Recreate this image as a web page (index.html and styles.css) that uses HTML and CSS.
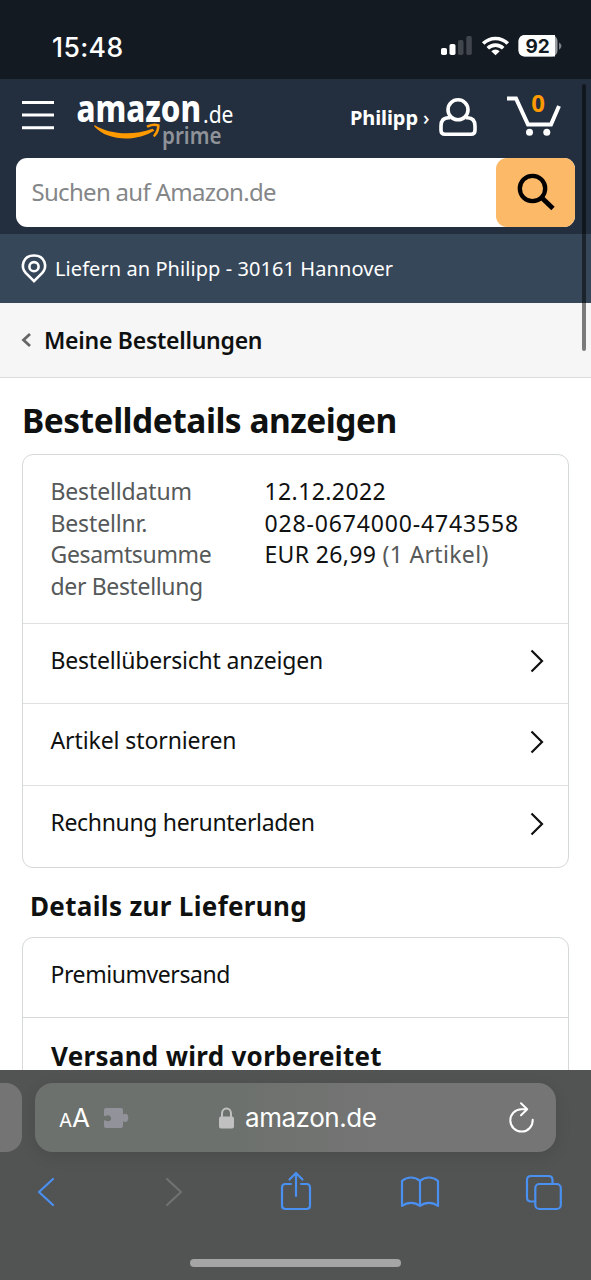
FILE: index.html
```
<!DOCTYPE html>
<html lang="de">
<head>
<meta charset="utf-8">
<title>Bestelldetails</title>
<link rel="stylesheet" href="styles.css">
</head>
<body>
<div class="phone">
  <div class="status">
    <span class="clock">15:48</span>
    <svg class="status-icons" width="124" height="26" viewBox="0 0 124 26">
      <g fill="#fff"><rect x="1" y="15" width="6" height="7" rx="1.8"/><rect x="9.500" y="11" width="6" height="11" rx="1.800"/></g>
      <g fill="#41464d"><rect x="18" y="7" width="5.500" height="15" rx="1.800"/><rect x="26.300" y="3" width="5.500" height="19" rx="1.800"/></g>
      <g fill="none" stroke="#fff" stroke-width="3.600"><path d="M43.200 10.500a17.500 17.500 0 0 1 24.600 0"/><path d="M47.800 15.300a11 11 0 0 1 15.400 0"/></g>
      <path d="M51.300 18.200a6 6 0 0 1 8.400 0L55.500 22.300z" fill="#fff"/>
      <rect x="78.500" y="2" width="39" height="21.500" rx="6" fill="#9a9da1"/>
      <path d="M84.500 2H115v21.500H84.500a6 6 0 0 1-6-6V8a6 6 0 0 1 6-6z" fill="#fff"/>
      <path d="M119 9.500q2.500 1.200 2.500 3.600t-2.500 3.600z" fill="#7b7f84"/>
      <text class="battery" x="97.700" y="19.500" text-anchor="middle">92</text>
    </svg>
  </div>

  <header class="header">
    <div class="topbar">
      <svg class="menu" width="32" height="30" viewBox="0 0 32 30" stroke="#fff" stroke-width="3"><path d="M0 2.500h32M0 15h32M0 27.700h32"/></svg>
      <svg class="logo" width="160" height="56" viewBox="0 0 160 56">
        <text class="logo-name" x="-0.500" y="27" textLength="124.500" lengthAdjust="spacingAndGlyphs">amazon</text>
        <text class="logo-tld" x="126" y="28" textLength="30.500" lengthAdjust="spacingAndGlyphs">.de</text>
        <text class="logo-prime" x="85" y="49" textLength="59.500" lengthAdjust="spacingAndGlyphs">prime</text>
        <path d="M17.500 30C32 39.500 56 41 75.500 33.700L77.500 35.500C60 47 31 46.500 17.300 31.500Z" fill="#ff9900"/>
        <path d="M71 31.200Q77 28.800 81.300 30.500Q81.500 36 77.500 40.500" fill="none" stroke="#ff9900" stroke-width="2.600" stroke-linecap="round"/>
      </svg>
      <span class="user">Philipp <i>›</i></span>
      <svg class="person" width="38" height="39" viewBox="0 0 38 39" fill="none" stroke="#fff" stroke-width="3.600"><circle cx="19" cy="11.800" r="10"/><path d="M11.300 19.700H9.500C4.500 19.700 2 22.500 2 28v4.300q0 4 4 4h26q4 0 4-4V28c0-5.500-2.500-8.300-7.500-8.300h-1.800"/></svg>
      <svg class="cart" width="55" height="44" viewBox="0 0 55 44">
        <path d="M0 4.500h9L21 30.500h23L52 12" fill="none" stroke="#fff" stroke-width="4"/>
        <circle cx="22.500" cy="38.200" r="3.500" fill="#fff"/><circle cx="39.800" cy="38.200" r="3.500" fill="#fff"/>
        <text class="cart-count" x="31" y="18" text-anchor="middle">0</text>
      </svg>
    </div>
    <div class="search">
      <span class="placeholder">Suchen auf Amazon.de</span>
      <span class="search-button"><svg width="38" height="38" viewBox="0 0 38 38" fill="none" stroke="#000" stroke-width="4.300"><circle cx="15.500" cy="15.500" r="12.700"/><path d="M24.500 24.500L36 35.500" stroke-width="4.800"/></svg></span>
    </div>
  </header>

  <div class="deliver">
    <svg width="26" height="30" viewBox="0 0 26 30" fill="none" stroke="#fff" stroke-width="2.600"><path d="M13 27.200L4.700 18.800C-.5 13 1.500 1.500 13 1.500S26.500 13 21.300 18.800Z"/><circle cx="13" cy="12.700" r="4.600"/></svg>
    <span class="deliver-text">Liefern an Philipp - 30161 Hannover</span>
  </div>

  <nav class="crumb">
    <svg width="11" height="14" viewBox="0 0 11 14" fill="none" stroke="#666" stroke-width="2.800"><path d="M9 1L2.500 7L9 13"/></svg>
    <span class="crumb-text">Meine Bestellungen</span>
  </nav>

  <main class="content">
    <h1>Bestelldetails anzeigen</h1>
    <section class="card">
      <dl class="summary">
        <dt>Bestelldatum</dt><dd class="date">12.12.2022</dd>
        <dt>Bestellnr.</dt><dd class="number">028-0674000-4743558</dd>
        <dt class="total-label">Gesamtsumme<br>der Bestellung</dt><dd class="total">EUR 26,99 <span>(1 Artikel)</span></dd>
      </dl>
      <div class="row row-a"><span>Bestellübersicht anzeigen</span><svg class="chev" viewBox="0 0 14 24"><path d="M1.500 1.500L12 12L1.500 22.500"/></svg></div>
      <div class="row row-b"><span>Artikel stornieren</span><svg class="chev" viewBox="0 0 14 24"><path d="M1.500 1.500L12 12L1.500 22.500"/></svg></div>
      <div class="row row-c"><span>Rechnung herunterladen</span><svg class="chev" viewBox="0 0 14 24"><path d="M1.500 1.500L12 12L1.500 22.500"/></svg></div>
    </section>
    <h2>Details zur Lieferung</h2>
    <section class="card">
      <div class="shipping">Premiumversand</div>
      <div class="state">Versand wird vorbereitet</div>
    </section>
  </main>

  <footer class="browser">
    <div class="tabs">
      <div class="prev-tab"></div>
      <div class="address">
        <span class="aa"><small>A</small>A</span>
        <svg class="puzzle" width="25" height="22" viewBox="0 0 25 22"><path fill="#92929a" d="M2 1h15q2 0 2 2v4.500q1-.8 2.500-.8c3.800 0 3.800 8.300 0 8.300q-1.500 0-2.500-.8V19q0 2-2 2H2q-2 0-2-2v-5q0-1 1.500-.6 1.500 1 3 .8c3.500-.4 3.500-5.400 0-5.800-1.500-.2-2 .4-3 .8Q0 9.500 0 8V3q0-2 2-2z"/></svg>
        <svg class="lock" width="15" height="22" viewBox="0 0 15 22"><rect x="0" y="9.500" width="15" height="12" rx="2" fill="#bfc0bf"/><path d="M3 10V6.500a4.500 5 0 0 1 9 0V10" fill="none" stroke="#bfc0bf" stroke-width="2"/></svg>
        <span class="url">amazon.de</span>
        <svg class="reload" width="25" height="30" viewBox="0 0 25 30" fill="none" stroke="#fff" stroke-width="2" stroke-linecap="round" stroke-linejoin="round"><path d="M17.500 7.200H12.500A11.200 11.200 0 1 0 23.700 17.800M12 1.200l6.200 6-6.200 6"/></svg>
      </div>
    </div>
    <div class="tools">
      <svg class="back" width="18" height="30" viewBox="0 0 18 30"><path d="M16 2L2 15L16 28"/></svg>
      <svg class="forward" width="18" height="30" viewBox="0 0 18 30"><path d="M2 2L16 15L2 28"/></svg>
      <svg class="share" width="32" height="40" viewBox="0 0 32 40"><path d="M11 13H5.500Q2 13 2 16.500v18Q2 38 5.500 38h21q3.500 0 3.500-3.500v-18Q30 13 26.500 13H21M16 25V2.500M9.500 8.500L16 2l6.500 6.500"/></svg>
      <svg class="book" width="40" height="32" viewBox="0 0 40 32"><path d="M20 5Q16 1.500 11 1.500T2 5V30Q6 26.800 11 26.800T20 30Q24 26.800 29 26.800T38 30V5Q34 1.500 29 1.500T20 5V30"/></svg>
      <svg class="pages" width="38" height="37" viewBox="0 0 38 37"><path d="M10 27.500H6Q2 27.500 2 23.500V6Q2 2 6 2H23.500Q27.500 2 27.500 6v4"/><rect x="10.300" y="10" width="25.500" height="25" rx="4"/></svg>
    </div>
    <div class="home"></div>
  </footer>
</div>
</body>
</html>
```

FILE: styles.css
```
* { box-sizing: border-box; }
body { margin: 0; font-family: "Noto Sans", "Open Sans", sans-serif; color: #0f1111; background: #fff; }
svg { display: block; flex: none; overflow: visible; }
span, h1, h2, dt, dd, .shipping, .state { white-space: nowrap; }

.phone { position: relative; width: 591px; height: 1280px; overflow: hidden; display: flex; flex-direction: column; }
.phone::after { content: ""; position: absolute; right: 5px; top: 84px; width: 4px; height: 267px; border-radius: 2px; background: rgba(0, 0, 0, .5); }

.status { flex: none; height: 79px; background: #131a22; display: flex; justify-content: space-between; padding: 31px 27px 0 52px; }
.clock { font: 500 26.500px/32px Inter, sans-serif; color: #fff; letter-spacing: .4px; }
.status-icons { margin-top: 2px; }
.battery { font: 700 19px Inter, sans-serif; fill: #131a22; }

.header { flex: none; height: 155px; background: #232f3e; padding: 16px 16px 0; }
.topbar { height: 62.500px; display: flex; align-items: flex-start; padding-left: 6px; }
.menu { margin-top: 5px; }
.logo { margin-left: 23px; }
.logo-name { font: 800 38px "Noto Sans", sans-serif; fill: #fff; }
.logo-tld { font: 400 24px "Noto Sans", sans-serif; fill: #fff; }
.logo-prime { font: 600 23px "Noto Sans", sans-serif; fill: #8f9298; }
.user { margin: 9px 0 0 113px; width: 89px; font-size: 20px; line-height: 28px; font-weight: 700; color: #fff; letter-spacing: -.1px; }
.user i { font-style: normal; font-weight: 500; }
.person { margin-top: 3px; }
.cart { margin-left: 30px; margin-top: -1px; }
.cart-count { font: 700 24px "Noto Sans", sans-serif; fill: #f90; }

.search { height: 69.500px; background: #fff; border-radius: 11px; display: flex; justify-content: space-between; align-items: center; }
.placeholder { margin: 0 0 2px 15.500px; font-size: 24px; letter-spacing: -.7px; color: #848688; }
.search-button { width: 79px; height: 69.500px; border-radius: 11px; background: #fcba69; display: flex; align-items: center; justify-content: center; }

.deliver { flex: none; height: 69px; background: #37475a; display: flex; align-items: center; padding-left: 20.500px; gap: 8.500px; color: #fff; }
.deliver-text { font-size: 20px; letter-spacing: .07px; }

.crumb { flex: none; height: 75px; background: #f6f6f6; border-bottom: 1px solid #dcdcdc; display: flex; align-items: center; padding-left: 21px; gap: 12px; }
.crumb-text { font-size: 23px; font-weight: 600; letter-spacing: -.27px; }

.content { flex: none; height: 692px; padding: 0 22px; overflow: hidden; }
h1 { margin: 0; height: 76px; padding-top: 18px; font-size: 33.500px; line-height: 48px; font-weight: 700; letter-spacing: -.5px; }
.card { border: 1.500px solid #d5d9d9; border-radius: 11px; }
.summary { margin: 0; height: 168px; padding: 21px 0 0 27.500px; display: grid; grid-template-columns: 214px 1fr; align-content: start; font-size: 23px; line-height: 31.600px; letter-spacing: -.15px; }
.summary dt, .summary span { color: #565959; }
.summary dd { margin: 0; }
.summary .date { letter-spacing: .4px; }
.summary .number { letter-spacing: .85px; }
.summary .total-label { letter-spacing: -.35px; }
.summary .total { letter-spacing: .33px; }
.row { border-top: 1px solid #dfe1e1; display: flex; justify-content: space-between; padding: 0 24px 0 27.500px; font-size: 23px; line-height: 32px; letter-spacing: -.2px; }
.row span { margin-top: 20px; }
.row-a { height: 80px; }
.row-b { height: 82px; letter-spacing: -.1px; }
.row-c { height: 82px; letter-spacing: -.33px; }
.chev { width: 14px; height: 24px; margin-top: 26px; fill: none; stroke: #0f1111; stroke-width: 2.200px; }
.row-a .chev { margin-top: 24.500px; }
h2 { margin: 0; height: 69px; padding: 20px 0 0 8px; font-size: 26px; line-height: 36px; font-weight: 700; letter-spacing: .33px; }
.shipping { height: 80px; padding: 20px 0 0 27.500px; font-size: 23px; line-height: 32px; letter-spacing: -.43px; border-bottom: 1px solid #d5d9d9; }
.state { height: 100px; padding: 20px 0 0 28px; font-size: 26px; line-height: 36px; font-weight: 700; letter-spacing: .3px; }

.browser { flex: none; height: 210px; background: #525353; padding-top: 13px; }
.tabs { display: flex; gap: 13px; }
.prev-tab { width: 22px; height: 69px; background: #747474; border-radius: 0 16px 16px 0; }
.address { width: 521px; height: 69px; border-radius: 18px; background: linear-gradient(90deg, #6d716d, #6d716d 40%, #757575 70%); display: flex; align-items: center; padding: 0 22px 0 24px; color: #fff; font-family: Inter, sans-serif; box-shadow: 0 4px 16px rgba(0, 0, 0, .1); }
.aa { width: 45px; font-size: 26px; }
.aa small { font-size: 19px; }
.lock { margin-left: 90px; }
.url { margin-left: 11px; font-size: 26px; letter-spacing: -.45px; }
.reload { margin-left: auto; margin-bottom: 2px; }
.tools { height: 40px; margin-top: 20px; display: flex; align-items: center; padding-left: 37px; }
.tools svg { fill: none; stroke: #4a90f0; stroke-width: 2.200px; stroke-linecap: round; stroke-linejoin: round; }
.tools .forward { margin-left: 110px; stroke: #717171; }
.tools .share { margin-left: 96.500px; margin-bottom: 2px; }
.tools .book { margin-left: 88px; }
.tools .pages { margin-left: 85.500px; }
.home { width: 211px; height: 8px; border-radius: 4px; background: #a5a5a5; margin: 47px 0 0 190px; }
```
